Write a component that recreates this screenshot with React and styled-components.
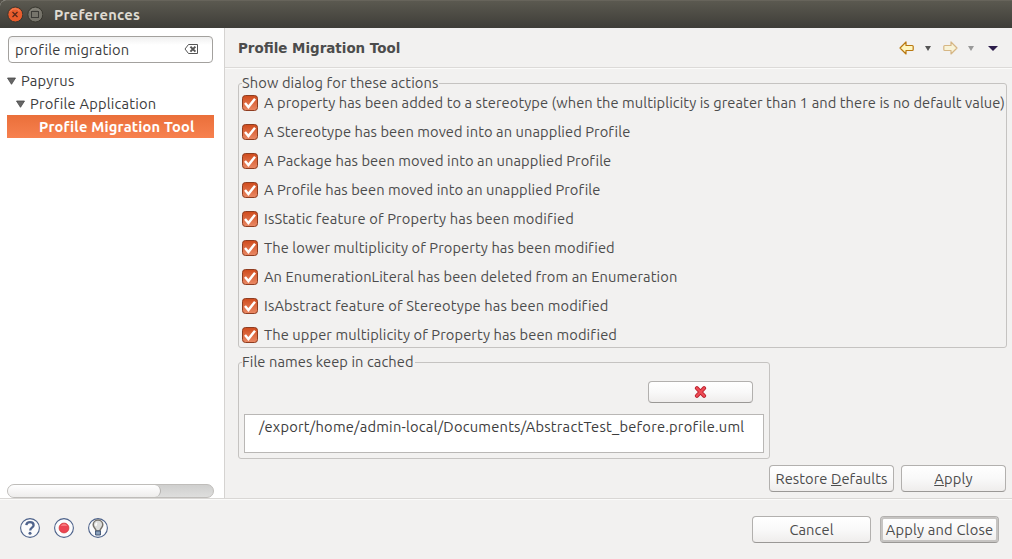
import React from 'react';
import styled, { createGlobalStyle } from 'styled-components';

const GlobalStyle = createGlobalStyle`
  * { box-sizing: border-box; }
  body {
    margin: 0;
    overflow: hidden;
    background: #f2f1f0;
    color: #4c4c4c;
    font: 14.667px/20px Ubuntu, "Noto Sans", sans-serif;
  }
  svg { display: block; flex: none; }
`;

const Label = styled.span`
  white-space: nowrap;
  letter-spacing: ${(p) => p.$track || 0.1}px;
  font-weight: ${(p) => (p.$bold ? 700 : 400)};
`;

const PageTitle = styled.h1`
  margin: 0;
  padding-top: 2px;
  white-space: nowrap;
  font: bold 13.45px/20px "DejaVu Sans", sans-serif;
`;

const Window = styled.div`
  width: 1012px;
  height: 559px;
  display: flex;
  flex-direction: column;
`;

const TitleBar = styled.header`
  height: 28px;
  flex: none;
  display: flex;
  align-items: center;
  gap: 4px;
  padding: 1px 7px 0;
  color: #dfdbd2;
  background: linear-gradient(#5b5950, #3e3d38);
  border-top: 1px solid #67645b;
  border-top-left-radius: 6px;
  box-shadow: 0 -6px 0 6px #55524a;
  clip-path: inset(0);
  & > span { margin-left: 7px; }
`;

const Body = styled.div`
  height: 470px;
  flex: none;
  display: flex;
`;

const Sidebar = styled.aside`
  width: 225px;
  flex: none;
  display: flex;
  flex-direction: column;
  padding: 8px 10px 0 7px;
  background: #fff;
  border-right: 1px solid #d5d3d1;
`;

const SearchField = styled.div`
  height: 27px;
  width: 205px;
  margin: 0 0 6px 1px;
  padding: 0 13px 0 6px;
  display: flex;
  align-items: center;
  justify-content: space-between;
  color: #3c3c3c;
  border: 1px solid #a3a19e;
  border-radius: 4px;
  background: linear-gradient(#f0f0f0, #fff 8px);
`;

const TreeRow = styled.div`
  height: 23px;
  width: 207px;
  display: flex;
  align-items: center;
  gap: 5px;
  padding-left: ${(p) => p.$indent}px;
  color: ${(p) => (p.$selected ? '#fff' : '#3c3c3c')};
  background: ${(p) => (p.$selected ? 'linear-gradient(#ea6f3a, #f7814f)' : 'none')};
`;

const Scrollbar = styled.div`
  margin-top: auto;
  height: 14px;
  width: 207px;
  border: 1px solid #bfbdba;
  border-radius: 7px;
  background: linear-gradient(#cfcfce, #dededd);
`;

const Thumb = styled.div`
  width: 153px;
  height: 12px;
  border-right: 1px solid #b5b3b0;
  border-radius: 6px;
  background: linear-gradient(#fff, #eeedec);
`;

const Page = styled.main`
  flex: 1;
  min-width: 0;
  display: flex;
  flex-direction: column;
`;

const PageHeader = styled.div`
  height: 40px;
  flex: none;
  display: flex;
  align-items: center;
  justify-content: space-between;
  padding: 0 14px 0 13px;
  border-bottom: 1px solid #dcdad8;
  box-shadow: 0 1px 0 #fbfbfa;
`;

const NavTools = styled.div`
  display: flex;
  align-items: center;
`;

const Group = styled.fieldset`
  width: ${(p) => p.$width}px;
  height: ${(p) => p.$height}px;
  min-width: 0;
  margin: ${(p) => p.$top}px 0 0 13px;
  padding: 0 3px;
  border: 1px solid #c5c3c1;
  border-radius: 3px;
`;

const Legend = styled.legend`
  height: 20px;
  padding: 0 1px 0 0;
  display: flex;
`;

const CheckRow = styled.label`
  height: 29px;
  display: flex;
  align-items: center;
  gap: 6px;
`;

const CheckList = styled.div`
  margin-top: -5px;
`;

const CacheColumn = styled.div`
  display: flex;
  flex-direction: column;
  align-items: flex-end;
  padding: 9px 2px 0;
`;

const Button = styled.button`
  width: ${(p) => p.$width}px;
  height: ${(p) => p.$height || 27}px;
  padding: 0;
  display: flex;
  align-items: center;
  justify-content: center;
  font: inherit;
  color: inherit;
  border: 1px solid #b2b0ae;
  border-bottom-color: #9a9896;
  border-radius: 4px;
  background: linear-gradient(#fff, #f9f9f9 50%, #efedec);
  box-shadow: ${(p) => (p.$primary ? 'inset 0 0 0 2px #c6c4c2' : 'none')};
`;

const DeleteButton = styled(Button)`
  margin-right: 11px;
`;

const FileList = styled.div`
  width: 520px;
  height: 39px;
  margin-top: 11px;
  padding: 2px 0 0 14px;
  color: #3c3c3c;
  background: #fff;
  border: 1px solid #b9b7b5;
`;

const PageActions = styled.div`
  display: flex;
  justify-content: flex-end;
  gap: 7px;
  padding: 6px 6px 0 0;
`;

const Footer = styled.footer`
  flex: 1;
  display: flex;
  align-items: center;
  padding: 0 13px 0 20px;
  border-top: 1px solid #d9d7d5;
  box-shadow: inset 0 1px 0 #fbfbfa;
`;

const HelpIcons = styled.div`
  display: flex;
  gap: 14px;
  margin-right: auto;
  padding-bottom: 2px;
`;

const FooterActions = styled.div`
  display: flex;
  gap: 9px;
  & > button { padding-top: 2px; }
`;

const WindowButton = ({ close }) => (
  <svg width="16" height="18" viewBox="0 0 16 18">
    <circle cx="8.3" cy="8.5" r="7.5" fill={close ? '#e95c2c' : '#76746b'} stroke="#38372f" />
    <path d="M3 5.5a6 6 0 0 1 10 0" fill="none" stroke={close ? '#f58a62' : '#8e8c82'} />
    {close
      ? <path d="M5.5 6l5 5M10.5 6l-5 5" stroke="#59281a" strokeWidth="1.3" />
      : <rect x="4.5" y="5.5" width="7" height="6" fill="none" stroke="#3c3b37" />}
  </svg>
);

const ClearIcon = () => (
  <svg width="15" height="11" viewBox="0 0 15 11">
    <path d="M4.5 .5h9v9h-9L1 5z" fill="#fff" stroke="#555" />
    <path d="M6.4 2.6l5 5M11.4 2.6l-5 5" stroke="#555" strokeWidth="2" />
  </svg>
);

const Expander = () => (
  <svg width="9" height="8" viewBox="0 0 9 8">
    <path d="M.5 1h8L4.5 7.3z" fill="#666" stroke="#484848" strokeWidth=".8" />
  </svg>
);

const Arrow = ({ forward }) => (
  <svg width="16" height="14" viewBox="0 0 16 14" opacity={forward ? 0.48 : 1}>
    <path
      d="M1 7L7 1v3.5h6.2q1 0 1 1v3q0 1-1 1H7V13z"
      transform={forward ? 'matrix(-1 0 0 1 16 0)' : undefined}
      fill="#fff6bf"
      stroke="#b97810"
      strokeWidth="1.2"
      strokeLinejoin="round"
    />
  </svg>
);

const CaretShape = styled.svg`
  margin: 2px ${(p) => p.$right || 0}px 0 ${(p) => p.$left || 0}px;
`;

const Caret = ({ color, size = 6, left, right }) => (
  <CaretShape $left={left} $right={right} width={size} height="5" viewBox="0 0 10 8" preserveAspectRatio="none">
    <path d="M0 0h10L5 8z" fill={color} />
  </CaretShape>
);

const Checkbox = () => (
  <svg width="16" height="16" viewBox="0 0 16 16">
    <defs>
      <linearGradient id="tick" x2="0" y2="1">
        <stop stopColor="#cf4a1b" />
        <stop offset="1" stopColor="#ea8a66" />
      </linearGradient>
    </defs>
    <rect x=".5" y=".5" width="15" height="15" rx="3" fill="url(#tick)" stroke="#8f3d20" />
    <path d="M3 8l3.4 4L13 3.8" fill="none" stroke="#fff" strokeWidth="2.5" />
  </svg>
);

const DeleteIcon = () => (
  <svg width="13" height="12" viewBox="0 0 13 12">
    <path d="M2.9 2.2L10.1 9.8M10.1 2.2L2.9 9.8" stroke="#b9202d" strokeWidth="4" strokeLinecap="round" />
    <path d="M2.9 2.2L10.1 9.8M10.1 2.2L2.9 9.8" stroke="#ee4c55" strokeWidth="2.3" strokeLinecap="round" />
  </svg>
);

const Round = ({ children }) => (
  <svg width="20" height="20" viewBox="0 0 20 20">
    <circle cx="10" cy="10" r="9.4" fill="#fbfbfc" stroke="#4d628a" strokeWidth="1.1" />
    {children}
  </svg>
);

const HelpIcon = () => (
  <Round>
    <path d="M6.3 7.2C6.6 4.7 8.2 4.2 10 4.2c2.2 0 3.6 1.1 3.6 3 0 2.6-3.4 2.4-3.4 5.2" fill="none" stroke="#4f638c" strokeWidth="2.3" />
    <circle cx="10" cy="15.2" r="1.5" fill="#4f638c" />
  </Round>
);

const RecordIcon = () => (
  <Round>
    <circle cx="10" cy="10" r="4.9" fill="#ec4452" stroke="#d43b3b" strokeWidth=".8" />
    <path d="M6.5 8q3.5-5 7 0z" fill="#f7777c" />
  </Round>
);

const BulbIcon = () => (
  <Round>
    <path d="M8 13c0-3-2.8-3.2-2.8-6.2a4.8 4.8 0 0 1 9.6 0c0 3-2.8 3.2-2.8 6.2z" fill="#dededc" stroke="#77736c" strokeWidth="1.5" />
    <path d="M7.6 13h4.8v4H7.6z" fill="#8da3bd" stroke="#3f5577" />
    <path d="M9 5q-1.5 1-1 3" stroke="#fff" strokeWidth="1.6" fill="none" />
  </Round>
);

const options = [
  ['A property has been added to a stereotype (when the multiplicity is greater than 1 and there is no default value)', 0.072],
  ['A Stereotype has been moved into an unapplied Profile', 0.08],
  ['A Package has been moved into an unapplied Profile', 0.08],
  ['A Profile has been moved into an unapplied Profile', 0.06],
  ['IsStatic feature of Property has been modified', 0.14],
  ['The lower multiplicity of Property has been modified', 0.09],
  ['An EnumerationLiteral has been deleted from an Enumeration', 0.095],
  ['IsAbstract feature of Stereotype has been modified', 0.14],
  ['The upper multiplicity of Property has been modified', 0.1],
];

export default function App() {
  return (
    <Window>
      <GlobalStyle />
      <TitleBar>
        <WindowButton close />
        <WindowButton />
        <Label $bold $track={0.26}>Preferences</Label>
      </TitleBar>
      <Body>
        <Sidebar>
          <SearchField>
            <Label $track={0.16}>profile migration</Label>
            <ClearIcon />
          </SearchField>
          <TreeRow $indent={0}><Expander /><Label $track={0.2}>Papyrus</Label></TreeRow>
          <TreeRow $indent={9}><Expander /><Label $track={0.2}>Profile Application</Label></TreeRow>
          <TreeRow $indent={32} $selected><Label $bold $track={0.19}>Profile Migration Tool</Label></TreeRow>
          <Scrollbar><Thumb /></Scrollbar>
        </Sidebar>
        <Page>
          <PageHeader>
            <PageTitle>Profile Migration Tool</PageTitle>
            <NavTools>
              <Arrow />
              <Caret color="#555" left={10} right={11} />
              <Arrow forward />
              <Caret color="#999" left={10} right={14} />
              <Caret color="#2c1d4a" size={10} />
            </NavTools>
          </PageHeader>
          <Group $width={769} $height={275} $top={5}>
            <Legend><Label $track={0.11}>Show dialog for these actions</Label></Legend>
            <CheckList>
              {options.map(([text, track]) => (
                <CheckRow key={text}><Checkbox /><Label $track={track}>{text}</Label></CheckRow>
              ))}
            </CheckList>
          </Group>
          <Group $width={532} $height={107} $top={4}>
            <Legend><Label $track={0.08}>File names keep in cached</Label></Legend>
            <CacheColumn>
              <DeleteButton $width={105} $height={22}><DeleteIcon /></DeleteButton>
              <FileList><Label $track={0.23}>/export/home/admin-local/Documents/AbstractTest_before.profile.uml</Label></FileList>
            </CacheColumn>
          </Group>
          <PageActions>
            <Button $width={125}><Label $track={0.08}>Restore <u>D</u>efaults</Label></Button>
            <Button $width={105}><Label $track={0.2}><u>A</u>pply</Label></Button>
          </PageActions>
        </Page>
      </Body>
      <Footer>
        <HelpIcons><HelpIcon /><RecordIcon /><BulbIcon /></HelpIcons>
        <FooterActions>
          <Button $width={119}><Label>Cancel</Label></Button>
          <Button $width={119} $primary><Label $track={0.2}>Apply and Close</Label></Button>
        </FooterActions>
      </Footer>
    </Window>
  );
}
